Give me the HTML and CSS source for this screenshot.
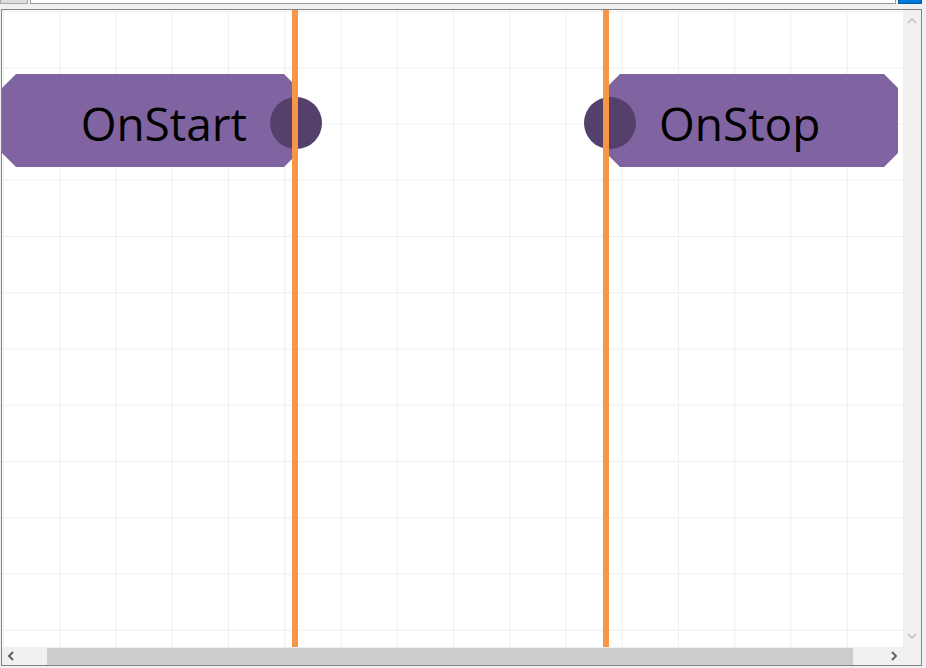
FILE: index.html
```html
<!DOCTYPE html>
<html lang="en">
<head>
    <meta charset="UTF-8">
    <title>Event Graph</title>
    <link rel="stylesheet" href="styles.css">
</head>
<body>
    <div class="toolbar">
        <div class="tool-btn"></div>
        <div class="tool-input"></div>
        <div class="tool-go"></div>
    </div>

    <div class="panel">
        <div class="canvas">
            <div class="node node-out">
                <span class="node-label">OnStart</span>
            </div>
            <div class="node node-in">
                <span class="node-label">OnStop</span>
            </div>

            <div class="port port-start"></div>
            <div class="port port-stop"></div>

            <div class="wire wire-start"></div>
            <div class="wire wire-stop"></div>
        </div>

        <div class="vscroll">
            <svg class="arrow" width="18" height="18" viewBox="0 0 18 18">
                <path d="M5 11 L9 7 L13 11" fill="none" stroke="#c2c2c2" stroke-width="1.6"/>
            </svg>
            <svg class="arrow" width="18" height="18" viewBox="0 0 18 18">
                <path d="M5 7 L9 11 L13 7" fill="none" stroke="#c2c2c2" stroke-width="1.6"/>
            </svg>
        </div>

        <div class="hscroll">
            <svg class="arrow" width="18" height="18" viewBox="0 0 18 18">
                <path d="M11 5 L7 9 L11 13" fill="none" stroke="#606060" stroke-width="2"/>
            </svg>
            <div class="track">
                <div class="thumb"></div>
            </div>
            <svg class="arrow" width="18" height="18" viewBox="0 0 18 18">
                <path d="M7 5 L11 9 L7 13" fill="none" stroke="#606060" stroke-width="2"/>
            </svg>
        </div>

        <div class="corner"></div>
    </div>
</body>
</html>
```

FILE: styles.css
```css
body {
    margin: 0;
    background: #f0f0f0;
    font-family: "Open Sans", "Noto Sans", sans-serif;
    overflow: hidden;
}
.toolbar {
    display: flex;
    gap: 2px;
    width: 922px;
    height: 4px;
    overflow: hidden;
}
.tool-btn {
    width: 26px;
    height: 3px;
    background: #dcdcdc;
    border: 1px solid #a8a8a8;
    border-top: none;
}
.tool-input {
    flex: 1;
    height: 3px;
    background: #ffffff;
    border: 1px solid #9a9a9a;
    border-top: none;
}
.tool-go {
    width: 22px;
    height: 3px;
    background: #0078d7;
    border: 1px solid #005a9e;
    border-top: none;
}
.panel {
    display: grid;
    grid-template-columns: 901px 18px;
    grid-template-rows: 637px 18px;
    width: 921px;
    margin: 5px 0 0 1px;
    border: 1px solid #828282;
    box-sizing: border-box;
}
.canvas {
    position: relative;
    overflow: hidden;
    background-color: #ffffff;
    background-image:
        linear-gradient(to right, #efefef 1px, transparent 1px),
        linear-gradient(to bottom, #efefef 1px, transparent 1px);
    background-size: 56.25px 56.25px;
    background-position: 1px 1px;
}
.node {
    position: absolute;
    top: 64px;
    height: 93px;
    display: flex;
    align-items: center;
    padding-top: 5px;
    box-sizing: border-box;
    background: #8064a2;
    clip-path: polygon(14px 0, calc(100% - 14px) 0, 100% 14px, 100% calc(100% - 14px), calc(100% - 14px) 100%, 14px 100%, 0 calc(100% - 14px), 0 14px);
}
.node-out {
    left: 0;
    width: 296px;
    justify-content: flex-end;
    padding-right: 51px;
}
.node-in {
    left: 604px;
    width: 292px;
    padding-left: 53px;
}
.node-label {
    font-size: 46px;
    color: #000000;
    line-height: 1;
}
.port {
    position: absolute;
    top: 87px;
    width: 52px;
    height: 52px;
    border-radius: 50%;
    background: #54406b;
}
.port-start {
    left: 268px;
}
.port-stop {
    left: 582px;
}
.wire {
    position: absolute;
    top: 0;
    bottom: 0;
    width: 6px;
    background: #f79646;
}
.wire-start {
    left: 290px;
}
.wire-stop {
    left: 601px;
}
.vscroll {
    display: flex;
    flex-direction: column;
    justify-content: space-between;
    background: #f0f0f0;
    padding: 2px 0;
}
.hscroll {
    display: flex;
    align-items: center;
    background: #f0f0f0;
}
.arrow {
    display: block;
    flex: none;
}
.track {
    flex: 1;
    height: 100%;
}
.thumb {
    margin-left: 27px;
    width: 806px;
    height: 17px;
    margin-top: 1px;
    background: #cdcdcd;
}
.corner {
    background: #f0f0f0;
}
```
